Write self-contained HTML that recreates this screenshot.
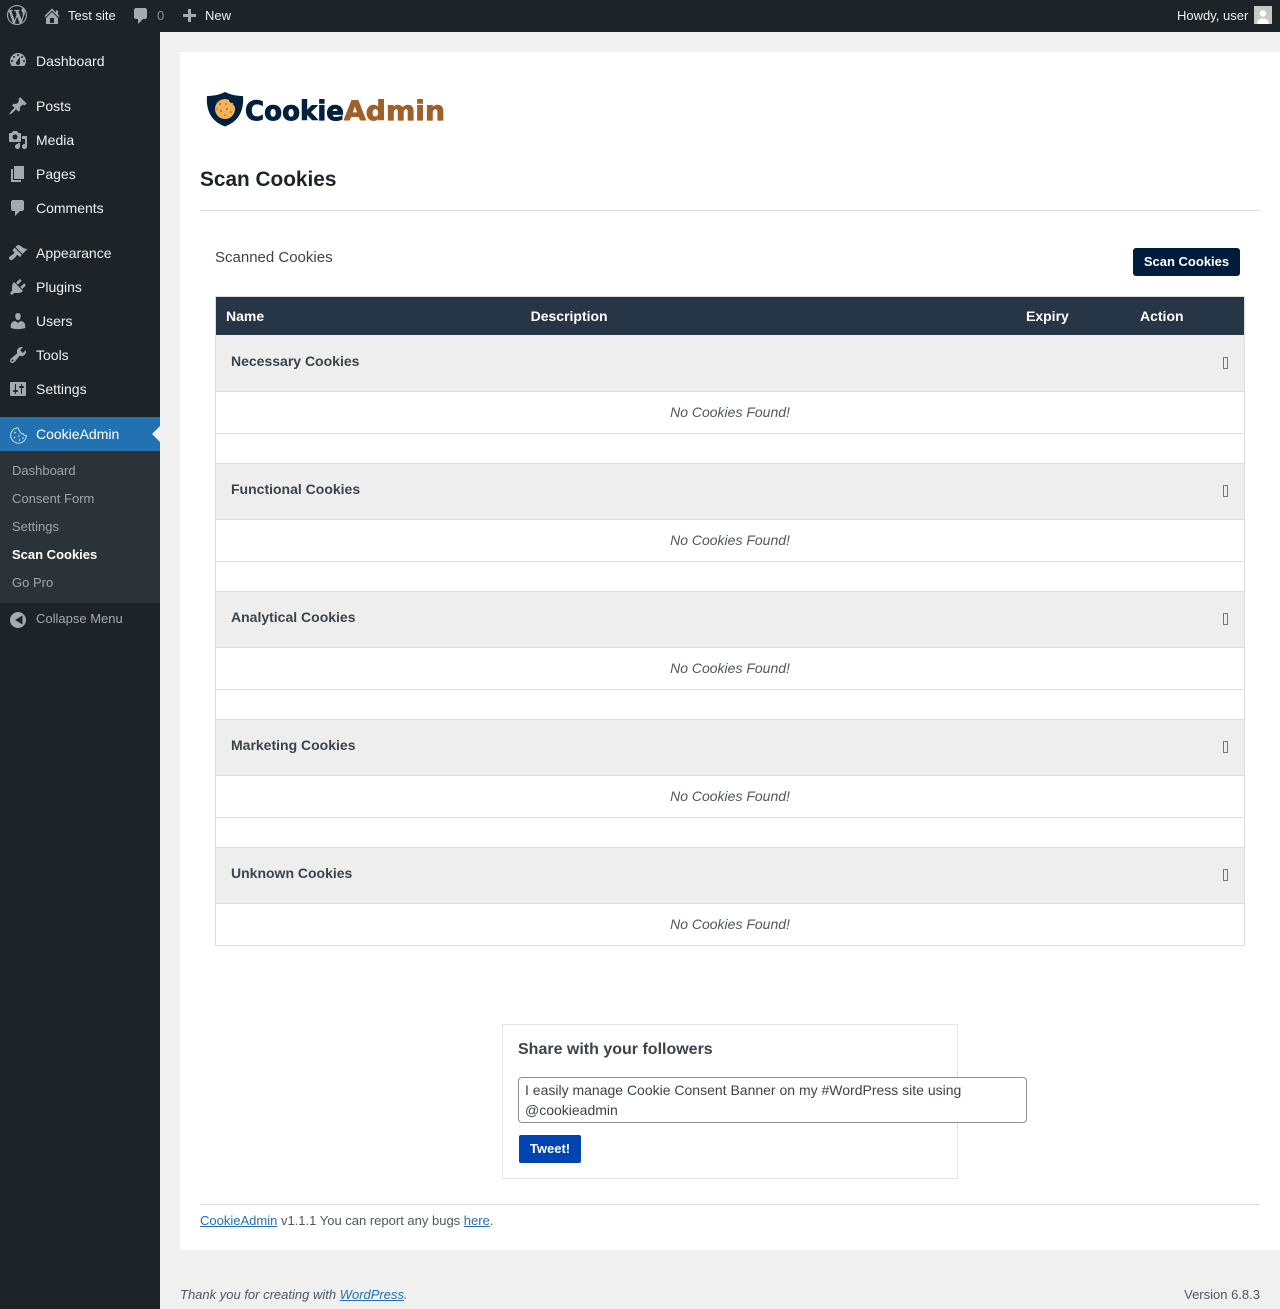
<!DOCTYPE html>
<html lang="en"><head><meta charset="utf-8"><title>Scan Cookies</title>
<style>
html,body{margin:0;padding:0}
body{position:relative;width:1280px;height:1309px;overflow:hidden;background:#f0f0f1;font-family:"Liberation Sans",Arial,sans-serif;font-size:13px;color:#3c434a}
div,svg,a{position:absolute}
.t{white-space:nowrap;line-height:20px}
a{position:static;color:#2271b1;text-decoration:underline}
.ic{fill:#a7aaad;width:20px;height:20px}
.m{left:36px;font-size:14px;color:#f0f0f1}
.s{left:12px;font-size:13px;color:#c3c4c7;opacity:.78}
.g{left:216px;width:1028px;height:57px;background:#eee;border-top:1px solid #ddd;border-bottom:1px solid #ddd;box-sizing:border-box}
.ln{left:215px;width:1030px;height:1px;background:#ddd}
.gt{left:231px;font-size:14px;font-weight:bold;color:#3c434a}
.nc{left:215px;width:1030px;text-align:center;font-size:14px;font-style:italic;color:#50575e}
.tf{left:1223px;width:3px;height:10px;border:1px solid #777;box-sizing:content-box}
.th{font-size:14px;font-weight:bold;color:#fff}
</style></head><body>

<div style="left:0;top:0;width:1280px;height:32px;background:#1d2327"></div>
<div style="left:0;top:32px;width:160px;height:1277px;background:#1d2327"></div>

<svg style="left:7px;top:5px;width:20px;height:20px;fill:#a7aaad" viewBox="0 0 20 20"><path d="M20 10c0-5.510-4.490-10-10-10C4.480 0 0 4.490 0 10c0 5.520 4.480 10 10 10 5.510 0 10-4.480 10-10zM7.780 15.370L4.370 6.220c.55-.02 1.170-.08 1.170-.08.5-.06.44-1.130-.06-1.110 0 0-1.450.11-2.370.11-.18 0-.37 0-.58-.01C4.120 2.690 6.870 1.110 10 1.110c2.330 0 4.450.87 6.050 2.340-.68-.11-1.650.39-1.650 1.580 0 .74.45 1.360.9 2.100.35.61.55 1.360.55 2.460 0 1.490-1.400 5-1.400 5l-3.030-8.370c.54-.02.82-.17.82-.17.5-.05.44-1.250-.06-1.220 0 0-1.440.12-2.380.12-.87 0-2.330-.12-2.330-.12-.5-.03-.56 1.200-.06 1.220l.92.08 1.260 3.410zM17.410 10c.24-.64.74-1.870.43-4.250.7 1.290 1.050 2.710 1.050 4.250 0 3.290-1.730 6.240-4.400 7.780.97-2.590 1.940-5.200 2.920-7.780zM6.100 18.090C3.120 16.650 1.110 13.530 1.110 10c0-1.300.23-2.480.72-3.590C3.250 10.300 4.670 14.200 6.100 18.090zm4.030-6.630l2.580 6.980c-.86.29-1.760.45-2.710.45-.79 0-1.570-.11-2.290-.33.81-2.380 1.620-4.740 2.420-7.100z"/></svg>
<svg class="ic" style="left:42px;top:6px" viewBox="0 0 20 20"><path d="M16 8.500l1.530 1.530-1.060 1.060L10 4.620l-6.470 6.470-1.060-1.060L10 2.500l4 4v-2h2v4zm-6-2.460l6 5.990V18H4v-5.970zM12 17v-5H8v5h4z" fill-rule="evenodd"/></svg>
<div class="t" style="left:68px;top:6px;color:#f0f0f1">Test site</div>
<svg class="ic" style="left:131px;top:6px" viewBox="0 0 20 20"><path d="M5 2h9c1.100 0 2 .9 2 2v7c0 1.100-.9 2-2 2h-2l-5 5v-5H5c-1.100 0-2-.9-2-2V4c0-1.100.9-2 2-2z"/></svg>
<div class="t" style="left:157px;top:6px;color:#8c8f94">0</div>
<svg class="ic" style="left:179px;top:7px" viewBox="0 0 20 20"><path d="M17 7v3h-5v5H9v-5H4V7h5V2h3v5h5z"/></svg>
<div class="t" style="left:205px;top:6px;color:#f0f0f1">New</div>
<div class="t" style="left:1177px;top:6px;color:#f0f0f1">Howdy, user</div>
<div style="left:1254px;top:6px;width:18px;height:18px;background:#c8c8c8;overflow:hidden"><svg style="left:0;top:0;width:18px;height:18px" viewBox="0 0 18 18"><circle cx="9" cy="7.500" r="3.200" fill="#fff"/><path d="M3 18c.5-4.500 3-5.500 6-5.500s5.500 1 6 5.500z" fill="#fff"/></svg></div>

<svg class="ic" style="left:8px;top:50px" viewBox="0 0 20 20"><path fill-rule="evenodd" d="M3.760 16h12.480c1.100-1.370 1.760-3.110 1.760-5 0-4.420-3.580-8-8-8s-8 3.580-8 8c0 1.890.66 3.630 1.760 5zM10 4c.55 0 1 .45 1 1s-.45 1-1 1-1-.45-1-1 .45-1 1-1zM6 6c.55 0 1 .45 1 1s-.45 1-1 1-1-.45-1-1 .45-1 1-1zm8 0c.55 0 1 .45 1 1s-.45 1-1 1-1-.45-1-1 .45-1 1-1zm-5.370 5.550L12 7v6c0 1.100-.9 2-2 2s-2-.9-2-2c0-.57.24-1.080.63-1.450zM4 10c.55 0 1 .45 1 1s-.45 1-1 1-1-.45-1-1 .45-1 1-1zm12 0c.55 0 1 .45 1 1s-.45 1-1 1-1-.45-1-1 .45-1 1-1z"/></svg>
<div class="t m" style="top:51px">Dashboard</div>
<svg class="ic" style="left:8px;top:96px" viewBox="0 0 20 20"><path d="M10.440 3.020l1.820-1.820 6.360 6.350-1.830 1.820c-1.050-.68-2.480-.57-3.410.36l-.75.75c-.92.93-1.040 2.350-.35 3.410l-1.830 1.820-2.410-2.410-2.800 2.790c-.42.42-3.380 2.710-3.800 2.290s1.860-3.390 2.280-3.810l2.790-2.790L4.100 9.360l1.830-1.820c1.050.69 2.480.57 3.400-.36l.75-.75c.93-.92 1.050-2.350.36-3.410z"/></svg>
<div class="t m" style="top:96px">Posts</div>
<svg class="ic" style="left:8px;top:130px" viewBox="0 0 20 20"><path fill-rule="evenodd" d="M13 11V4c0-.55-.45-1-1-1h-1.670L9 1H5L3.670 3H2c-.55 0-1 .45-1 1v7c0 .55.45 1 1 1h10c.55 0 1-.45 1-1zM7 4.500c1.380 0 2.500 1.120 2.500 2.500S8.380 9.500 7 9.500 4.500 8.380 4.500 7 5.620 4.500 7 4.500zM14 6h5v10.500c0 1.380-1.120 2.500-2.500 2.500S14 17.880 14 16.500s1.120-2.500 2.500-2.500c.17 0 .34.02.5.05V9h-3V6zm-4 8.050V13h2v3.500c0 1.380-1.120 2.500-2.500 2.500S7 17.880 7 16.500 8.120 14 9.500 14c.17 0 .34.02.5.05z"/></svg>
<div class="t m" style="top:130px">Media</div>
<svg class="ic" style="left:8px;top:164px" viewBox="0 0 20 20"><path d="M6 15V2h10v13H6zm-1 1h8v2H3V5h2v11z"/></svg>
<div class="t m" style="top:164px">Pages</div>
<svg class="ic" style="left:8px;top:198px" viewBox="0 0 20 20"><path d="M5 2h9c1.100 0 2 .9 2 2v7c0 1.100-.9 2-2 2h-2l-5 5v-5H5c-1.100 0-2-.9-2-2V4c0-1.100.9-2 2-2z"/></svg>
<div class="t m" style="top:198px">Comments</div>
<svg class="ic" style="left:8px;top:243px" viewBox="0 0 20 20"><path d="M14.480 11.060L7.410 3.990l1.500-1.500c.5-.56 2.300-.47 3.510.32 1.210.8 1.430 1.280 2.910 2.100 1.180.64 2.450 1.260 4.450.85zm-.71.71L6.700 4.700 4.930 6.470c-.39.39-.39 1.020 0 1.410l1.060 1.060c.39.39.39 1.030 0 1.420-.6.6-1.430 1.110-2.210 1.690-.35.26-.7.53-1.010.84C1.430 13.230.25 15.200 1.610 16.560c.74.75 1.900.97 3.550-.35.64-.52 1.240-1.050 1.810-1.600.79-.78 1.270-1.430 1.690-2.210.6-.6 1.020-.6 1.410 0l1.070 1.070c.39.39 1.020.39 1.410 0z"/></svg>
<div class="t m" style="top:243px">Appearance</div>
<svg class="ic" style="left:8px;top:277px" viewBox="0 0 20 20"><path d="M13.110 4.360L9.870 7.600 8 5.730l3.240-3.240c.35-.34 1.050-.2 1.560.32.52.51.66 1.210.31 1.550zm-8 1.770l.91-1.120 9.010 9.010-1.190.84c-.71.71-2.630 1.160-3.820 1.160H6.140L4.900 17.260c-.59.59-1.540.59-2.120 0-.59-.58-.59-1.530 0-2.120l1.240-1.240v-3.880c0-1.130.4-3.190 1.090-3.890zm7.260 3.970l3.240-3.240c.34-.35 1.040-.21 1.550.31.52.51.66 1.210.31 1.550l-3.240 3.250z"/></svg>
<div class="t m" style="top:277px">Plugins</div>
<svg class="ic" style="left:8px;top:311px" viewBox="0 0 20 20"><path d="M10 9.250c-2.270 0-2.730-3.440-2.730-3.440C7 4.020 7.820 2 9.970 2c2.160 0 2.980 2.020 2.710 3.810 0 0-.41 3.440-2.680 3.440zm0 2.570L12.720 10c2.390 0 4.520 2.330 4.520 4.530v2.490s-3.650 1.130-7.240 1.130c-3.650 0-7.240-1.130-7.240-1.130v-2.490c0-2.250 1.940-4.480 4.470-4.480z"/></svg>
<div class="t m" style="top:311px">Users</div>
<svg class="ic" style="left:8px;top:345px" viewBox="0 0 20 20"><path fill-rule="evenodd" d="M16.680 9.770c-1.340 1.340-3.300 1.670-4.950.99l-5.410 6.520c-.99.99-2.590.99-3.580 0s-.99-2.590 0-3.570l6.520-5.420c-.68-1.650-.35-3.610.99-4.950 1.280-1.280 3.120-1.620 4.720-1.060l-2.890 2.890 2.820 2.820 2.860-2.870c.53 1.580.18 3.390-1.080 4.650zM3.810 16.210c.4.39 1.040.39 1.430 0 .4-.4.4-1.040 0-1.430-.39-.4-1.030-.4-1.430 0-.39.39-.39 1.030 0 1.430z"/></svg>
<div class="t m" style="top:345px">Tools</div>
<svg class="ic" style="left:8px;top:379px" viewBox="0 0 20 20"><path fill-rule="evenodd" d="M18 16V4c0-.55-.45-1-1-1H3c-.55 0-1 .45-1 1v12c0 .55.45 1 1 1h14c.55 0 1-.45 1-1zM8 11h1c.55 0 1 .45 1 1s-.45 1-1 1H8v1.500c0 .28-.22.5-.5.5s-.5-.22-.5-.5V13H6c-.55 0-1-.45-1-1s.45-1 1-1h1V5.500c0-.28.22-.5.5-.5s.5.22.5.5V11zm5-2h-1c-.55 0-1-.45-1-1s.45-1 1-1h1V5.500c0-.28.22-.5.5-.5s.5.22.5.5V7h1c.55 0 1 .45 1 1s-.45 1-1 1h-1v5.500c0 .28-.22.5-.5.5s-.5-.22-.5-.5V9z"/></svg>
<div class="t m" style="top:379px">Settings</div>

<div style="left:0;top:417px;width:160px;height:34px;background:#2271b1"></div>
<svg style="left:10px;top:427px;width:17px;height:17px;fill:none;stroke:#dfe9f2;stroke-width:.9" viewBox="0 0 17 17"><path d="M8 .8C3.900.8.700 4.200.700 8.300c0 4.200 3.500 7.900 7.800 7.900 4.100 0 7.700-3.400 7.800-7.600-1.300.3-2.600-.4-3-1.800-1.300.3-2.800-.5-3.200-2-.9-.9-1.700-2.300-2.100-4z"/><g fill="#e6eef5" stroke="none"><circle cx="5" cy="5.500" r=".8"/><circle cx="4.500" cy="10.500" r=".8"/><circle cx="9" cy="9" r=".7"/><circle cx="9.500" cy="13" r=".8"/><circle cx="13" cy="11" r=".7"/></g></svg>
<div class="t m" style="top:424px;color:#fff">CookieAdmin</div>
<svg style="left:152px;top:426px;width:8px;height:16px" viewBox="0 0 8 16"><path d="M8 0L0 8l8 8z" fill="#f0f0f1"/></svg>

<div style="left:0;top:451px;width:160px;height:152px;background:#2c3338"></div>
<div class="t s" style="top:461px">Dashboard</div>
<div class="t s" style="top:489px">Consent Form</div>
<div class="t s" style="top:517px">Settings</div>
<div class="t s" style="top:545px;color:#fff;font-weight:bold;opacity:1">Scan Cookies</div>
<div class="t s" style="top:573px">Go Pro</div>
<svg class="ic" style="left:8px;top:610px" viewBox="0 0 20 20"><path fill-rule="evenodd" d="M10 2a8 8 0 1 0 0 16 8 8 0 0 0 0-16zm4.500 3.500v9L7 10z"/></svg>
<div class="t" style="left:36px;top:609px;color:#a7aaad">Collapse Menu</div>

<div style="left:180px;top:52px;width:1100px;height:1198px;background:#fff"></div>

<svg style="left:200px;top:85px;width:260px;height:50px;filter:blur(.35px)" viewBox="0 0 260 50"><path d="M25 7C31 10 37 11 43 11 44 24 40 36 25 41.500 10 36 6 24 7 11 13 11 19 10 25 7z" fill="#03203f"/><circle cx="25" cy="24" r="10" fill="#f3b35c"/><circle cx="32" cy="15" r="3" fill="#03203f"/><circle cx="35.500" cy="18.500" r="2.600" fill="#03203f"/><g fill="#8a5a20"><circle cx="20" cy="19" r=".9"/><circle cx="26" cy="19" r=".8"/><circle cx="21" cy="26" r=".9"/><circle cx="27" cy="24" r=".9"/><circle cx="31" cy="27" r=".8"/><circle cx="25" cy="30" r=".8"/><circle cx="17" cy="24" r=".7"/></g><text x="45" y="35" font-family="DejaVu Sans" font-weight="bold" font-size="27" fill="#03203f" stroke="#03203f" stroke-width=".9" stroke-linejoin="round" textLength="99" lengthAdjust="spacingAndGlyphs">Cookie</text><text x="144" y="35" font-family="DejaVu Sans" font-weight="bold" font-size="27" fill="#9c6028" stroke="#9c6028" stroke-width=".9" stroke-linejoin="round" textLength="101" lengthAdjust="spacingAndGlyphs">Admin</text></svg>

<div class="t" style="left:200px;top:168px;font-size:20.8px;line-height:24px;font-weight:bold;color:#1d2327">Scan Cookies</div>
<div style="left:200px;top:210px;width:1060px;height:1px;background:#dcdcde"></div>
<div class="t" style="left:215px;top:249px;font-size:15px;height:18px;line-height:18px;color:#3c434a">Scanned Cookies</div>
<div class="t" style="left:1133px;top:248px;width:107px;height:28px;line-height:27px;background:#001c3d;border-radius:3px;text-align:center;color:#fff;font-weight:bold">Scan Cookies</div>

<div style="left:215px;top:296px;width:1030px;height:650px;border:1px solid #ddd;box-sizing:border-box"></div>
<div style="left:216px;top:297px;width:1028px;height:38px;background:#263646"></div>
<div class="t th" style="left:226px;top:306px">Name</div>
<div class="t th" style="left:530.6px;top:306px">Description</div>
<div class="t th" style="left:1026px;top:306px">Expiry</div>
<div class="t th" style="left:1140px;top:306px">Action</div>

<div class="g" style="top:335px;border-top:0"></div>
<div class="t gt" style="top:351px">Necessary Cookies</div><div class="tf" style="top:357px"></div>
<div class="t nc" style="top:402px">No Cookies Found!</div>
<div class="ln" style="top:433px"></div>

<div class="g" style="top:463px"></div>
<div class="t gt" style="top:479px">Functional Cookies</div><div class="tf" style="top:485px"></div>
<div class="t nc" style="top:530px">No Cookies Found!</div>
<div class="ln" style="top:561px"></div>

<div class="g" style="top:591px"></div>
<div class="t gt" style="top:607px">Analytical Cookies</div><div class="tf" style="top:613px"></div>
<div class="t nc" style="top:658px">No Cookies Found!</div>
<div class="ln" style="top:689px"></div>

<div class="g" style="top:719px"></div>
<div class="t gt" style="top:735px">Marketing Cookies</div><div class="tf" style="top:741px"></div>
<div class="t nc" style="top:786px">No Cookies Found!</div>
<div class="ln" style="top:817px"></div>

<div class="g" style="top:847px"></div>
<div class="t gt" style="top:863px">Unknown Cookies</div><div class="tf" style="top:869px"></div>
<div class="t nc" style="top:914px">No Cookies Found!</div>

<div style="left:502px;top:1024px;width:456px;height:155px;border:1px solid #e2e4e7;box-sizing:border-box"></div>
<div class="t" style="left:518px;top:1040px;font-size:16px;font-weight:bold;color:#3c434a">Share with your followers</div>
<div style="left:518px;top:1077px;width:509px;height:46px;border:1px solid #8c8f94;border-radius:4px;box-sizing:border-box;background:#fff"></div>
<div class="t" style="left:525px;top:1080px;font-size:14px;color:#3c434a">I easily manage Cookie Consent Banner on my #WordPress site using</div>
<div class="t" style="left:525px;top:1100px;font-size:14px;color:#3c434a">@cookieadmin</div>
<div class="t" style="left:519px;top:1135px;width:62px;height:28px;line-height:27px;background:#0044b2;border-radius:2px;text-align:center;color:#fff;font-weight:bold">Tweet!</div>

<div style="left:200px;top:1204px;width:1060px;height:1px;background:#dcdcde"></div>
<div class="t" style="left:200px;top:1211px;color:#50575e"><a>CookieAdmin</a> v1.1.1 You can report any bugs <a>here</a>.</div>
<div class="t" style="left:180px;top:1285px;font-style:italic;color:#50575e">Thank you for creating with <a>WordPress</a>.</div>
<div class="t" style="right:20px;top:1285px;color:#50575e">Version 6.8.3</div>
</body></html>
